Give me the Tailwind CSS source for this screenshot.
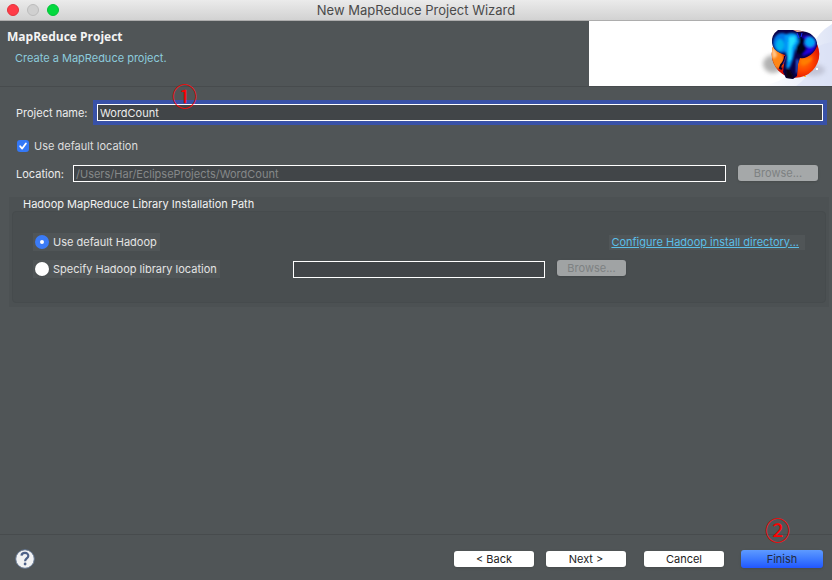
<!DOCTYPE html>
<html lang="en">
<head>
<meta charset="utf-8">
<meta name="viewport" content="width=device-width, initial-scale=1">
<title>New MapReduce Project Wizard</title>
<script src="https://cdn.jsdelivr.net/npm/@tailwindcss/browser@4"></script>
</head>
<body class="flex min-h-screen flex-col bg-[#505557] font-['Inter',sans-serif] text-[11px] leading-4 text-[#ececec]">
  <div class="flex h-[21px] items-center border-b border-[#adadad] bg-linear-to-b from-[#ebebeb] to-[#d2d2d2] px-[7px]">
    <div class="flex flex-1 gap-2">
      <button type="button" aria-label="Close" class="size-3 rounded-full border border-[#e2333c] bg-[#ff3b47]"></button>
      <button type="button" aria-label="Minimize" class="size-3 rounded-full border border-[#bcbcbc] bg-[#d0d0d0]"></button>
      <button type="button" aria-label="Zoom" class="size-3 rounded-full border border-[#02c238] bg-[#03d93e]"></button>
    </div>
    <h1 class="text-[13px] text-[#4a4a4a]">New MapReduce Project Wizard</h1>
    <div class="flex-1"></div>
  </div>

  <header class="flex h-[66px] justify-between border-b border-[#474b4d]">
    <div class="pt-2 pl-[7px]">
      <h2 class="font-['Open_Sans',sans-serif] text-[12px] font-bold text-[#f4f4f4]">MapReduce Project</h2>
      <p class="mt-[5px] pl-2 text-[#8ccbdc]">Create a MapReduce project.</p>
    </div>
    <svg class="h-[65px] w-[243px] bg-white" viewBox="0 0 243 65" aria-hidden="true">
      <defs>
        <linearGradient id="sky" x1="0" y1="0" x2="1" y2="0"><stop offset="0" stop-color="#fff"/><stop offset="1" stop-color="#dfe5f6"/></linearGradient>
        <radialGradient id="ball" cx=".66" cy=".66" r=".55"><stop offset="0" stop-color="#ff7a00"/><stop offset=".35" stop-color="#ff4600"/><stop offset=".75" stop-color="#dc0e00"/><stop offset="1" stop-color="#8c0000"/></radialGradient>
        <filter id="soft" x="-30%" y="-30%" width="160%" height="160%"><feGaussianBlur stdDeviation="2"/></filter>
        <filter id="smooth" x="-30%" y="-30%" width="160%" height="160%"><feGaussianBlur stdDeviation="1"/></filter>
        <clipPath id="disc"><circle cx="206.500" cy="33" r="23.800"/></clipPath>
        <clipPath id="head"><path d="M189 9h15l4 2q10-2 15 3 6 5 5 11-3 8-10 11-4 2-7 1l-2 6-1 12-4 3-7-1-3-6 1-7 1-10-5-2q-7-3-8-10-1-8 6-13z"/></clipPath>
      </defs>
      <path d="M172 65Q210 58 221 28 229 11 243 3v62z" fill="url(#sky)"/>
      <path d="M228 26q7-4 15-5v44h-36q18-12 21-39z" fill="#d9e0f5" opacity=".6"/>
      <ellipse cx="184" cy="43" rx="10" ry="9" fill="#999" opacity=".75" filter="url(#soft)"/>
      <ellipse cx="224" cy="49" rx="12" ry="6" fill="#99a" opacity=".4" filter="url(#soft)"/>
      <circle cx="206.500" cy="33" r="23.800" fill="url(#ball)"/>
      <g clip-path="url(#disc)">
        <path d="M181 22q10 5 14 14l-1 8-6 8q-7-8-7-30z" fill="#ff8616" filter="url(#smooth)"/>
        <path d="M182 25q5 3 6 10l-4 3z" fill="#ffc78e" filter="url(#smooth)"/>
        <path d="M185 47q5 8 13 10l-2-8z" fill="#d81000" filter="url(#smooth)"/>
        <path d="M212 38q8 1 11-3 1 8-10 9z" fill="#ff7e00" filter="url(#smooth)"/>
        <path d="M198 9h18l-2 4h-9z" fill="#f3b79a"/>
      </g>
      <g clip-path="url(#head)">
        <rect x="180" y="8" width="50" height="52" fill="#0a0048"/>
        <g filter="url(#smooth)">
          <ellipse cx="193" cy="22" rx="9" ry="10" fill="#0077e8"/>
          <ellipse cx="191" cy="24" rx="4" ry="6" fill="#00b4ee"/>
          <path d="M196 14q7-4 13 0l1 8-4 7-2 9-3 8-4 3 1-13-3-9z" fill="#0098f8"/>
          <path d="M200 16l6-1 1 5-4 6-1 12-3 3z" fill="#22e0ff"/>
          <path d="M213 15q10-2 14 5 1 8-5 12l-8 3-3-6 4-7z" fill="#2200e0"/>
          <ellipse cx="221" cy="21" rx="5" ry="5" fill="#00a8f8"/>
          <path d="M211 14l5 4-1 5 3 5-5 6-5-2-1-6 3-5z" fill="#010014"/>
          <path d="M207 38l3 1-1 12-2 2z" fill="#2858d8"/>
          <path d="M197 46l4 3 4 8-8 1z" fill="#100010"/>
        </g>
        <path d="M208 12l2 5M213 12l-1 4" stroke="#1c30ff"/>
      </g>
      <path d="M196 35q0 5-4 9l-1 3 2 1" fill="none" stroke="#09002d" stroke-width="2"/>
      <path d="M197 35q-1 5-3 8" fill="none" stroke="#5a2c9a"/>
      <path d="M227 47h2v2h-2z" fill="#fff"/><path d="M215 55h2v1h-2z" fill="#ffc52f"/>
    </svg>
  </header>

  <main class="relative flex-1">
    <span class="absolute top-[-8px] left-[172px] font-['Noto_Sans_CJK_SC',sans-serif] text-[25px] leading-8 text-[#f00]">①</span>
    <div class="flex items-center pt-[17px] pr-[9px] pl-4">
      <label for="name" class="w-[81px]">Project name:</label>
      <input id="name" type="text" value="WordCount" class="h-[17px] min-w-0 flex-1 rounded-none border border-white bg-[#414548] px-[2px] text-[#ececec] ring-4 ring-[#3851a8] outline-none">
    </div>
    <label class="mt-[17px] flex w-fit items-center gap-[5px] pl-[17px] text-[#dedede]">
      <span class="grid size-3 place-items-center">
        <input type="checkbox" checked class="col-start-1 row-start-1 size-3 appearance-none rounded-[3px] bg-[#3478f6]">
        <svg class="pointer-events-none col-start-1 row-start-1 size-3" viewBox="0 0 12 12" fill="none" stroke="#fff" stroke-width="1.8" stroke-linecap="round" stroke-linejoin="round"><path d="M3.2 6.3l2 2.3L8.9 3.4"/></svg>
      </span>
      Use default location
    </label>
    <div class="mt-[11px] flex items-center pr-[14px] pl-4">
      <label for="location" class="w-[57px]">Location:</label>
      <input id="location" type="text" value="/Users/Har/EclipseProjects/WordCount" disabled class="h-[17px] min-w-0 flex-1 rounded-none border border-white bg-[#414548] px-[2px] text-[#858889]">
      <button type="button" disabled class="ml-3 h-4 w-20 self-start rounded-[3px] bg-[#a5a8a9] text-[#7d8182] shadow-sm">Browse...</button>
    </div>

    <fieldset class="mt-[15px] mr-[3px] ml-[9px] bg-[#4c5153] px-[3px] pb-1">
      <legend class="float-left h-[14px] w-full pl-[11px] leading-[14px] text-[#f2f2f2]">Hadoop MapReduce Library Installation Path</legend>
      <div class="clear-both flex h-[92px] flex-col gap-[9px] rounded-[4px] border border-[#464b4d] bg-[#494e50] pt-[21px] pr-5 pl-5">
        <div class="flex items-center justify-between">
          <label class="flex h-[18px] items-center gap-1 bg-[#505557] pr-[3px] pl-[2px] text-[#e4e4e4]">
            <input type="radio" name="hadoop" checked class="size-[14px] appearance-none rounded-full border-[5px] border-[#3b7bf7] bg-white">
            Use default Hadoop
          </label>
          <a href="#" class="bg-[#505557] pr-[6px] pl-[2px] leading-[15px] text-[#5bbfe8] underline">Configure Hadoop install directory...</a>
        </div>
        <div class="flex items-center">
          <div class="w-[260px]">
            <label class="flex h-[18px] w-fit items-center gap-1 bg-[#505557] pr-[3px] pl-[2px] text-[#e4e4e4]">
              <input type="radio" name="hadoop" class="size-[14px] appearance-none rounded-full bg-white shadow-sm">
              Specify Hadoop library location
            </label>
          </div>
          <input type="text" aria-label="Hadoop library location" class="h-[17px] w-[252px] rounded-none border border-white bg-[#414548] px-[2px]">
          <button type="button" disabled class="ml-3 h-4 w-[69px] self-start rounded-[3px] bg-[#a0a3a4] text-[#7d8182] shadow-sm">Browse...</button>
        </div>
      </div>
    </fieldset>
  </main>

  <footer class="relative flex h-[46px] items-center border-t border-[#474b4d] pt-[2px] pr-[9px] pl-[15px]">
    <span class="absolute top-[-22px] right-[42px] font-['Noto_Sans_CJK_SC',sans-serif] text-[25px] leading-8 text-[#f00]">②</span>
    <button type="button" aria-label="Help" class="mr-auto">
      <svg class="size-5" viewBox="0 0 20 20" fill="none"><circle cx="10" cy="10" r="9.3" fill="#f1f2f3" stroke="#60738f"/><path d="M6.500 6.600C6.800 2.800 13.600 3 13.300 7c-.2 2.500-3.200 2.500-3.200 5.200" stroke="#4d6188" stroke-width="2.200"/><circle cx="10.100" cy="15" r="1.400" fill="#4d6188"/></svg>
    </button>
    <button type="button" class="h-4 w-20 rounded-[3px] bg-white text-[#222] shadow-sm">&lt; Back</button>
    <button type="button" class="ml-3 h-4 w-20 rounded-[3px] bg-white text-[#222] shadow-sm">Next &gt;</button>
    <button type="button" class="ml-[18px] h-4 w-20 rounded-[3px] bg-white text-[#222] shadow-sm">Cancel</button>
    <button type="button" class="ml-[17px] h-[18px] w-[82px] rounded-[3px] bg-linear-to-b from-[#5e9aff] to-[#2256ff] text-[#222b40] shadow-sm">Finish</button>
  </footer>
</body>
</html>
